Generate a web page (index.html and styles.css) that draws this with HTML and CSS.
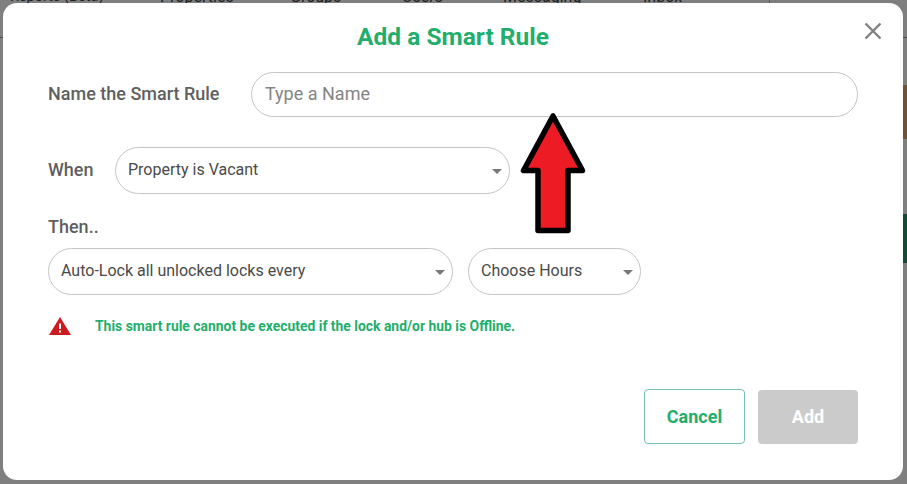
FILE: index.html
```html
<!DOCTYPE html>
<html lang="en">
<head>
<meta charset="utf-8">
<title>Add a Smart Rule</title>
<link rel="stylesheet" href="styles.css">
</head>
<body>
<div class="page">
  <nav class="nav">
    <span class="nav-item nav-reports">Reports (Beta)</span>
    <span class="nav-item nav-properties">Properties</span>
    <span class="nav-item nav-groups">Groups</span>
    <span class="nav-item nav-users">Users</span>
    <span class="nav-item nav-messaging">Messaging</span>
    <span class="nav-item nav-inbox">Inbox</span>
  </nav>
  <div class="side-block side-orange"></div>
  <div class="side-block side-green"></div>
</div>
<div class="backdrop"></div>
<main class="modal">
  <h1 class="title">Add a Smart Rule</h1>
  <button class="close" type="button" aria-label="Close">
    <svg width="20" height="20" viewBox="0 0 20 20"><path d="M2.5 2.5 17.5 17.5M17.5 2.5 2.5 17.5" fill="none" stroke="#808080" stroke-width="2.4"/></svg>
  </button>
  <div class="row row-name">
    <label class="label label-name" for="rule-name">Name the Smart Rule</label>
    <input class="field field-name" id="rule-name" type="text" placeholder="Type a Name">
  </div>
  <div class="row row-when">
    <span class="label label-when">When</span>
    <div class="field select select-when">Property is Vacant</div>
  </div>
  <div class="label label-then">Then..</div>
  <div class="row row-then">
    <div class="field select select-action">Auto-Lock all unlocked locks every</div>
    <div class="field select select-hours">Choose Hours</div>
  </div>
  <div class="row row-warning">
    <svg class="warn-icon" width="22" height="18" viewBox="0 0 22 18"><path d="M11 0 22 18H0Z" fill="#cc1b1f"/><rect x="10" y="6.500" width="2" height="5.500" fill="#fff"/><rect x="10" y="13.500" width="2" height="2" fill="#fff"/></svg>
    <p class="warning">This smart rule cannot be executed if the lock and/or hub is Offline.</p>
  </div>
  <div class="actions">
    <button class="btn btn-cancel" type="button">Cancel</button>
    <button class="btn btn-add" type="button">Add</button>
  </div>
</main>
<svg class="arrow" width="907" height="484" viewBox="0 0 907 484"><path d="M553 116 523.5 170.5H538V230.500H568V170.500H582.500Z" fill="#ed1c24" stroke="#000" stroke-width="5.500" stroke-linejoin="round"/></svg>
</body>
</html>
```
FILE: styles.css
```css
* { box-sizing: border-box; }
html, body { margin: 0; height: 100%; }
body {
  width: 907px;
  height: 484px;
  overflow: hidden;
  position: relative;
  background: #fff;
  font-family: Roboto, "Liberation Sans", sans-serif;
}
.page { height: 484px; position: relative; }
.nav {
  height: 38px;
  border-bottom: 1px solid #999;
  position: relative;
  overflow: hidden;
}
.nav::after {
  content: "";
  position: absolute;
  left: 769px;
  top: 0;
  width: 1px;
  height: 37px;
  background: #aaa;
}
.nav-item {
  position: absolute;
  top: -12px;
  font-size: 16px;
  line-height: 18px;
  color: #444;
  white-space: nowrap;
}
.nav-reports { left: 10px; font-size: 14.5px; }
.nav-properties { left: 160px; }
.nav-groups { left: 290px; }
.nav-users { left: 402px; }
.nav-messaging { left: 503px; }
.nav-inbox { left: 643px; }
.side-block { position: absolute; right: 0; width: 4px; }
.side-orange { top: 85px; height: 54px; background: #e8a25a; }
.side-green { top: 214px; height: 49px; background: #23966a; }
.backdrop {
  position: absolute;
  inset: 0;
  background: rgba(0, 0, 0, .5);
}
.modal {
  position: absolute;
  left: 3px;
  top: 3px;
  width: 900px;
  height: 477px;
  background: #fff;
  border-radius: 14px;
  padding: 20px 45px 0;
  display: flex;
  flex-direction: column;
}
.title {
  margin: 0;
  font-size: 24.500px;
  line-height: 28px;
  font-weight: 700;
  color: #1fae6b;
  text-align: center;
}
.close {
  position: absolute;
  right: 20px;
  top: 18px;
  width: 20px;
  height: 20px;
  padding: 0;
  border: 0;
  background: none;
  display: flex;
}
.row { display: flex; align-items: center; }
.label {
  font-size: 18px;
  line-height: 20px;
  font-weight: 500;
  color: #5f5f5f;
}
.field {
  border: 1px solid #c4c4c4;
  border-radius: 24px;
  background: #fff;
  font-family: inherit;
  color: #4a4a4a;
}
.row-name { margin-top: 21px; }
.label-name { width: 203px; padding-bottom: 1px; }
.field-name {
  width: 607px;
  height: 45px;
  padding: 0 13px 2px;
  font-size: 18px;
  outline: 0;
}
.field-name::placeholder { color: #858585; opacity: 1; }
.row-when { margin-top: 30px; }
.label-when { width: 67px; padding-bottom: 1px; }
.select {
  position: relative;
  height: 47px;
  display: flex;
  align-items: center;
  padding: 0 0 2px 12px;
  font-size: 16px;
}
.select::after {
  content: "";
  position: absolute;
  right: 7px;
  top: 21px;
  border-left: 5px solid transparent;
  border-right: 5px solid transparent;
  border-top: 5px solid #777;
}
.select-when { width: 395px; }
.label-then { margin-top: 23px; }
.row-then { margin-top: 11px; gap: 15px; }
.select-action { width: 405px; }
.select-hours { width: 173px; }
.row-warning { margin: 21px 0 0 1px; }
.warn-icon { flex: none; }
.warning {
  margin: 0 0 0 24px;
  font-size: 13.900px;
  line-height: 20px;
  font-weight: 700;
  color: #1fae6b;
}
.actions {
  margin-top: 53px;
  display: flex;
  justify-content: flex-end;
  align-items: center;
  gap: 13px;
}
.btn {
  height: 55px;
  border-radius: 4px;
  font-family: inherit;
  font-size: 18px;
  font-weight: 700;
  padding: 0;
}
.btn-cancel {
  width: 101px;
  background: #fff;
  border: 1px solid #74c3b4;
  color: #1fae6b;
}
.btn-add {
  width: 100px;
  height: 54px;
  background: #cbcbcb;
  border: 0;
  color: #fff;
}
.arrow { position: absolute; left: 0; top: 0; pointer-events: none; }
```
